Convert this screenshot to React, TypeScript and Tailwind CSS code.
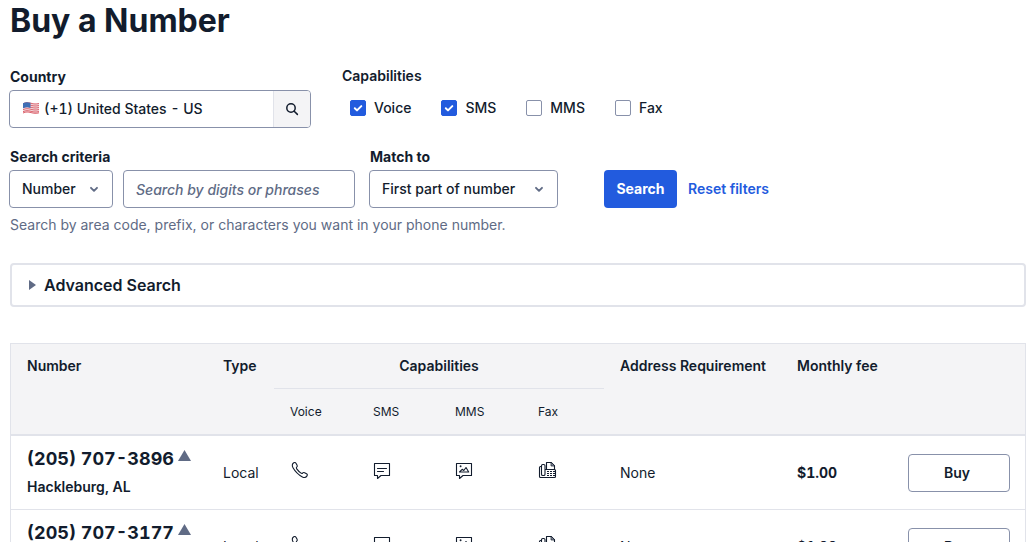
import type { ReactNode } from 'react';

const numbers = [
  { number: '(205) 707-3896', city: 'Hackleburg, AL' },
  { number: '(205) 707-3177', city: 'Hackleburg, AL' },
];

const capabilities = [
  { name: 'Voice', on: true },
  { name: 'SMS', on: true },
  { name: 'MMS', on: false },
  { name: 'Fax', on: false },
];

function Flag() {
  return (
    <svg viewBox="0 0 18 14" className="-mt-0.5 h-3.5 w-[18px] shrink-0" aria-hidden="true">
      <path d="M1 2.2C4 .8 6 1 9 1.8s5 1 8 .2v10c-3 .8-5 .6-8-.2s-5-1-8 .4z" fill="#f3dfe2" />
      <g fill="none" stroke="#dd6670" strokeWidth="1">
        <path d="M1 2.7C4 1.3 6 1.5 9 2.3s5 1 8 .2" />
        <path d="M1 4.7C4 3.3 6 3.5 9 4.3s5 1 8 .2" />
        <path d="M1 6.7C4 5.3 6 5.5 9 6.3s5 1 8 .2" />
        <path d="M1 8.7C4 7.3 6 7.5 9 8.3s5 1 8 .2" />
        <path d="M1 10.7C4 9.3 6 9.5 9 10.3s5 1 8 .2" />
        <path d="M1 12C4 10.6 6 10.8 9 11.6s5 1 8 .2" />
      </g>
      <path d="M1 2.2C4 .8 6 1 8.500 1.700v5.200C6 6.200 4 6 1 7.300z" fill="#3f6fb5" />
    </svg>
  );
}

function Chevron() {
  return (
    <svg viewBox="0 0 10 10" className="pointer-events-none h-2.5 w-2.5" aria-hidden="true">
      <path d="M2 3.800 5 6.800l3-3" fill="none" stroke="#606b85" strokeWidth="1.900" strokeLinecap="round" strokeLinejoin="round" />
    </svg>
  );
}

function Icon({ label, children }: { label: string; children: ReactNode }) {
  return (
    <svg viewBox="0 0 20 20" role="img" aria-label={label} className="-mt-1.5 -ml-px h-5 w-5" fill="none" stroke="#121c2d" strokeWidth="1.100" strokeLinejoin="round" strokeLinecap="round">
      {children}
    </svg>
  );
}

const bubble = 'M2.500 3.500h15v12H9l-3.500 3v-3h-3z';

function PhoneIcon() {
  return (
    <Icon label="Voice">
      <path d="M4.800 2.800c.9-.6 1.800-.3 2.300.6l1 1.900c.4.8.2 1.400-.4 1.900-.5.5-.5 1 0 1.700 1.100 1.500 2.700 3.100 4.300 4.200.7.5 1.200.4 1.700-.1.5-.6 1.100-.7 1.900-.3l1.900 1c.9.5 1.100 1.400.5 2.200-1 1.600-2.700 2-4.600 1C9.500 14.800 6.200 11.500 4 7.700c-1.100-2-.8-3.800.8-4.900z" />
    </Icon>
  );
}

function SmsIcon() {
  return (
    <Icon label="SMS">
      <path d={bubble} />
      <path d="M5.500 8.500h9M5.500 11.500h6" />
    </Icon>
  );
}

function MmsIcon() {
  return (
    <Icon label="MMS">
      <path d={bubble} />
      <path d="m5.500 12 2.700-2.700 1.600 1.200L12 7.500l2.700 4.500z" />
      <circle cx="6.600" cy="6.300" r=".4" />
    </Icon>
  );
}

function FaxIcon() {
  return (
    <Icon label="Fax">
      <path d="M4.500 6.500h-1c-.6 0-1 .4-1 1v9c0 .6.400 1 1 1h14c.6 0 1-.4 1-1v-6c0-.6-.4-1-1-1h-9" />
      <rect x="4.500" y="4.500" width="3.500" height="11" rx="1.300" fill="#fff" />
      <path d="M9.500 9.500v-7h4.500l3.500 3.500v3.500" />
      <path d="M14 2.500V6h3.500z" fill="#8a90a0" strokeWidth=".7" />
      <path d="M10 11.500h8M10 13.500h8M10 15.500h8" strokeDasharray="2 1" strokeLinecap="butt" strokeWidth="1" />
    </Icon>
  );
}

const field = 'h-[38px] rounded border border-[#8891aa] bg-white text-sm font-medium text-[#121c2d]';
const label = 'block text-sm leading-5';
const th = 'px-4 pt-3 text-left align-top text-sm leading-5 font-semibold whitespace-nowrap';
const td = 'border-b border-[#e1e3ea] px-4';

export default function App() {
  return (
    <main className="min-h-screen bg-white px-2.5 font-['Inter',sans-serif] text-[#121c2d]">
      <h1 className="pt-px text-[32px] leading-10 font-bold">Buy a Number</h1>

      <form className="-ml-px" onSubmit={(e) => e.preventDefault()}>
        <div className="mt-[25px] flex gap-[31px]">
          <div className="w-[302px]">
            <label htmlFor="country" className={label + ' ml-px pt-px font-bold'}>Country</label>
            <div className={field + ' mt-[3px] flex overflow-hidden'}>
              <div className="flex min-w-0 flex-1 items-center gap-1 pl-3">
                <Flag />
                <input id="country" defaultValue="(+1) United States - US" className="min-w-0 flex-1 tabular-nums outline-none" />
              </div>
              <button type="button" aria-label="Search countries" className="flex w-[37px] items-center justify-center border-l border-[#e1e3ea] bg-[#f4f4f6]">
                <svg viewBox="0 0 14 14" className="h-3.5 w-3.5" fill="none" stroke="#121c2d" strokeWidth="1.500" strokeLinecap="round" aria-hidden="true">
                  <circle cx="6" cy="6" r="4.200" />
                  <path d="m9.200 9.200 3.200 3.200" />
                </svg>
              </button>
            </div>
          </div>
          <fieldset>
            <legend className={label + ' font-semibold'}>Capabilities</legend>
            <div className="flex gap-[30px] pt-3 pl-2">
              {capabilities.map((c) => (
                <label key={c.name} className="flex items-center gap-2 text-sm leading-5 font-medium">
                  <span className="grid h-4 w-4">
                    <input type="checkbox" defaultChecked={c.on} className="peer col-start-1 row-start-1 h-4 w-4 appearance-none rounded-xs border border-[#8891aa] bg-white checked:border-[#225bde] checked:bg-[#225bde]" />
                    <svg viewBox="0 0 16 16" className="pointer-events-none invisible col-start-1 row-start-1 peer-checked:visible" fill="none" stroke="#fff" strokeWidth="2" strokeLinecap="round" strokeLinejoin="round" aria-hidden="true">
                      <path d="m4.800 8.300 2.200 2.100 4.300-4.300" />
                    </svg>
                  </span>
                  {c.name}
                </label>
              ))}
            </div>
          </fieldset>
        </div>

        <div className="mt-[19px] flex items-end">
          <div>
            <label htmlFor="criteria" className={label + ' ml-px font-bold'}>Search criteria</label>
            <div className="mt-[3px] flex gap-2.5">
              <div className="grid w-[104px] items-center">
                <select id="criteria" className={field + ' col-start-1 row-start-1 w-full appearance-none pl-3'}>
                  <option>Number</option>
                </select>
                <span className="pointer-events-none col-start-1 row-start-1 mr-3.5 justify-self-end"><Chevron /></span>
              </div>
              <input aria-label="Search by digits or phrases" placeholder="Search by digits or phrases" className={field + ' w-[232px] px-3 placeholder:text-[#606b85] placeholder:italic'} />
            </div>
          </div>
          <div className="ml-3.5 w-[189px]">
            <label htmlFor="match" className={label + ' ml-px font-bold'}>Match to</label>
            <div className="mt-[3px] grid items-center">
              <select id="match" className={field + ' col-start-1 row-start-1 w-full appearance-none pl-3'}>
                <option>First part of number</option>
              </select>
              <span className="pointer-events-none col-start-1 row-start-1 mr-3.5 justify-self-end"><Chevron /></span>
            </div>
          </div>
          <button type="submit" className="ml-[46px] h-[38px] w-[73px] rounded bg-[#225bde] text-sm font-bold text-white">Search</button>
          <button type="reset" className="ml-[11px] h-[38px] text-sm font-semibold text-[#225bde]">Reset filters</button>
        </div>
        <p className="mt-[7px] ml-px text-sm leading-5 text-[#606b85]">Search by area code, prefix, or characters you want in your phone number.</p>
      </form>

      <button type="button" aria-expanded="false" className="mt-7 flex h-11 w-full items-center gap-2 rounded-sm border-2 border-[#e1e3ea] pl-[17px] text-base font-semibold">
        <svg viewBox="0 0 7 10" className="h-2.5 w-[7px]" aria-hidden="true"><path d="M0 0v10l7-5z" fill="#606b85" /></svg>
        Advanced Search
      </button>

      <table className="mt-9 w-full table-fixed border-separate border-spacing-0 border border-b-0 border-[#e1e3ea]">
        <colgroup>
          <col className="w-[196px]" />
          <col className="w-[67px]" />
          <col className="w-[83px]" />
          <col className="w-[82px]" />
          <col className="w-[83px]" />
          <col className="w-[82px]" />
          <col className="w-[177px]" />
          <col className="w-[111px]" />
          <col />
        </colgroup>
        <thead className="bg-[#f4f4f6]">
          <tr className="h-[45px]">
            <th rowSpan={2} className={th + ' border-b-2 border-[#e1e3ea]'}>Number</th>
            <th rowSpan={2} className={th + ' border-b-2 border-[#e1e3ea]'}>Type</th>
            <th colSpan={4} className="border-b border-[#e1e3ea] pt-3 text-center align-top text-sm leading-5 font-semibold">Capabilities</th>
            <th rowSpan={2} className={th + ' border-b-2 border-[#e1e3ea]'}>Address Requirement</th>
            <th rowSpan={2} className={th + ' border-b-2 border-[#e1e3ea]'}>Monthly fee</th>
            <th rowSpan={2} aria-label="Actions" className="border-b-2 border-[#e1e3ea]" />
          </tr>
          <tr className="h-[47px]">
            {capabilities.map((c) => (
              <th key={c.name} className="border-b-2 border-[#e1e3ea] px-4 text-left text-xs font-normal">{c.name}</th>
            ))}
          </tr>
        </thead>
        <tbody>
          {numbers.map((n) => (
            <tr key={n.number} className="h-[74px] text-sm">
              <td className={td + ' pb-1 whitespace-nowrap'}>
                <div className="flex items-center gap-1 text-lg leading-7 font-bold tabular-nums">
                  {n.number}
                  <svg viewBox="0 0 13 11" className="-mt-1.5 h-[11px] w-[13px]" role="img" aria-label="Beta"><path d="M6.500 0 13 11H0z" fill="#606b85" /></svg>
                </div>
                <div className="mt-1 leading-5 font-semibold">{n.city}</div>
              </td>
              <td className={td}>Local</td>
              <td className={td}><PhoneIcon /></td>
              <td className={td}><SmsIcon /></td>
              <td className={td}><MmsIcon /></td>
              <td className={td}><FaxIcon /></td>
              <td className={td}>None</td>
              <td className={td + ' font-bold tabular-nums'}>$1.00</td>
              <td className={td + ' pr-[15px]'}>
                <button type="button" aria-label={'Buy ' + n.number} className="block h-[38px] w-full rounded border border-[#8891aa] bg-white pr-1 font-semibold">Buy</button>
              </td>
            </tr>
          ))}
        </tbody>
      </table>
    </main>
  );
}
